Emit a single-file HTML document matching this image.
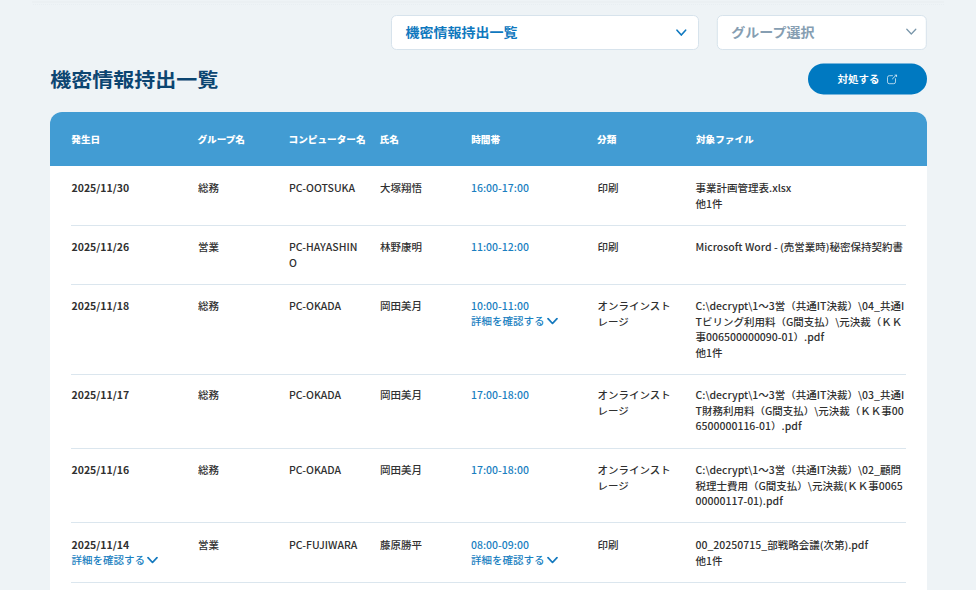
<!DOCTYPE html>
<html lang="ja">
<head>
<meta charset="utf-8">
<title>機密情報持出一覧</title>
<style>
*{box-sizing:border-box;margin:0;padding:0}
html,body{width:976px;height:590px;overflow:hidden}
body{background:#eef3f6;font-family:"Noto Sans CJK JP","Liberation Sans",sans-serif;color:#303030;position:relative;-webkit-font-smoothing:antialiased}
.topband{position:absolute;left:32px;top:1px;width:912px;height:2px;background:#ebf0f3}
.topdots{position:absolute;left:32px;top:4px;width:912px;height:1px;background-image:repeating-linear-gradient(90deg,transparent 0 1px,#e8eef2 1px 2px)}
.sel{position:absolute;top:15px;height:34.5px;background:#fff;border:1px solid #d7e3ec;border-radius:5.5px;font-size:14px;line-height:30px;white-space:nowrap}
.sel1{left:391px;width:308px;padding-left:13.6px;color:#0f78be;font-weight:700}
.sel2{left:716.5px;width:210.5px;transform:translateX(-0.2px);padding-left:14px;color:#869eb2;font-weight:700}
.sel svg{position:absolute;top:13px}
.sq{display:inline-block;transform:scaleY(0.93);transform-origin:0 50%}
.title{position:absolute;left:50.3px;top:64px;font-size:21px;line-height:30px;font-weight:700;color:#0c4571;white-space:nowrap;transform:scaleY(0.93);transform-origin:0 6px}
.btn{position:absolute;left:808px;top:63px;width:119px;height:31px;border-radius:16px;transform:translateY(0.4px);background:#0079c1;color:#fff;font-size:10.5px;font-weight:700;line-height:31.4px;white-space:nowrap}
.btn span{position:absolute;left:29.6px;top:0;transform:scaleY(0.93);transform-origin:0 50%}
.btn svg{position:absolute;left:79.4px;top:11px}
.card{position:absolute;left:50px;top:112px;width:877px;height:500px;background:#fff;border-radius:12px 12px 0 0;overflow:hidden}
.thead{position:absolute;left:0;top:0;width:877px;height:54px;background:#429cd3;color:#fff;font-size:9.65px;font-weight:900;line-height:54px;white-space:nowrap}
.thead div{position:absolute;top:-0.5px;transform:scaleY(0.93);transform-origin:0 50%}
.row{position:absolute;left:21px;width:835px;border-top:1px solid #dbe6ee;font-size:10.5px;line-height:16.56px;font-weight:500}
.row>div{position:absolute;top:calc(var(--t,13px) + 1.1px);white-space:nowrap;transform:scaleY(0.93);transform-origin:0 0}
.c1{left:0.5px;width:110px;font-weight:700}
.c2{left:127px;width:73px}
.c3{left:218px;width:73px}
.c4{left:309px;width:73px}
.c5{left:400px;width:108px;color:#1a7fc1}
.c6{left:526.5px;width:81px}
.c7{left:624.5px;width:210px}
.lnk{color:#1a7fc1;font-weight:500;white-space:nowrap;display:block;position:relative;top:-0.5px}
.lnk svg{display:inline-block;vertical-align:-0.1px;margin-left:2px}
</style>
</head>
<body>
<div class="topband"></div>
<div class="topdots"></div>

<div class="sel sel1"><span class="sq">機密情報持出一覧</span><svg style="left:284.2px" width="12" height="8" viewBox="0 0 12 8"><path d="M1 1.2 L5.3 6.05 L9.6 1.2" fill="none" stroke="#0f79c0" stroke-width="1.6" stroke-linecap="round" stroke-linejoin="round"/></svg></div>
<div class="sel sel2"><span class="sq">グループ選択</span><svg style="left:188.4px;top:12.3px" width="12" height="8" viewBox="0 0 12 8"><path d="M1 1.2 L5.5 6 L10 1.2" fill="none" stroke="#7996aa" stroke-width="1.25" stroke-linecap="round" stroke-linejoin="round"/></svg></div>

<div class="title">機密情報持出一覧</div>

<div class="btn"><span>対処する</span><svg width="11" height="11" viewBox="0 0 11 11"><path d="M5.9 1.3 H2.3 Q0.5 1.3 0.5 3.1 V7.5 Q0.5 9.3 2.3 9.3 H6.7 Q8.5 9.3 8.5 7.5 V3.9" fill="none" stroke="#fff" stroke-opacity="0.8" stroke-width="0.85"/><path d="M5.2 4.7 L9.5 0.5 M7.5 0.45 H9.55 V2.5" fill="none" stroke="#fff" stroke-opacity="0.9" stroke-width="0.85"/></svg></div>

<div class="card">
  <div class="thead">
    <div style="left:21.3px">発生日</div>
    <div style="left:147.4px">グループ名</div>
    <div style="left:238.6px">コンピューター名</div>
    <div style="left:329.6px">氏名</div>
    <div style="left:421.2px">時間帯</div>
    <div style="left:547.1px">分類</div>
    <div style="left:646px">対象ファイル</div>
  </div>

  <div class="row" style="top:54px;height:59px;border-top:0;--t:14px">
    <div class="c1">2025/11/30</div><div class="c2">総務</div><div class="c3">PC-OOTSUKA</div><div class="c4">大塚翔悟</div>
    <div class="c5">16:00-17:00</div><div class="c6">印刷</div><div class="c7">事業計画管理表.xlsx<br>他1件</div>
  </div>
  <div class="row" style="top:113px;height:59px;--t:13px">
    <div class="c1">2025/11/26</div><div class="c2">営業</div><div class="c3">PC-HAYASHIN<br>O</div><div class="c4">林野康明</div>
    <div class="c5">11:00-12:00</div><div class="c6">印刷</div><div class="c7">Microsoft Word - (売営業時)秘密保持契約書</div>
  </div>
  <div class="row" style="top:172px;height:90px;--t:13px">
    <div class="c1">2025/11/18</div><div class="c2">総務</div><div class="c3">PC-OKADA</div><div class="c4">岡田美月</div>
    <div class="c5">10:00-11:00<span class="lnk">詳細を確認する<svg width="11" height="8" viewBox="0 0 11 8"><path d="M1 1.1 L5.5 6.3 L10 1.1" fill="none" stroke="#1479be" stroke-width="1.7" stroke-linecap="round" stroke-linejoin="round"/></svg></span></div>
    <div class="c6">オンラインスト<br>レージ</div><div class="c7">C:\decrypt\1～3営（共通IT決裁）\04_共通I<br>Tビリング利用料（G間支払）\元決裁（ＫＫ<br>事006500000090-01）.pdf<br>他1件</div>
  </div>
  <div class="row" style="top:262px;height:74px;--t:12px">
    <div class="c1">2025/11/17</div><div class="c2">総務</div><div class="c3">PC-OKADA</div><div class="c4">岡田美月</div>
    <div class="c5">17:00-18:00</div><div class="c6">オンラインスト<br>レージ</div><div class="c7">C:\decrypt\1～3営（共通IT決裁）\03_共通I<br>T財務利用料（G間支払）\元決裁（ＫＫ事00<br>6500000116-01）.pdf</div>
  </div>
  <div class="row" style="top:336px;height:74px;--t:13px">
    <div class="c1">2025/11/16</div><div class="c2">総務</div><div class="c3">PC-OKADA</div><div class="c4">岡田美月</div>
    <div class="c5">17:00-18:00</div><div class="c6">オンラインスト<br>レージ</div><div class="c7">C:\decrypt\1～3営（共通IT決裁）\02_顧問<br>税理士費用（G間支払）\元決裁(ＫＫ事0065<br>00000117-01).pdf</div>
  </div>
  <div class="row" style="top:410px;height:60px;--t:14px">
    <div class="c1">2025/11/14<span class="lnk">詳細を確認する<svg width="11" height="8" viewBox="0 0 11 8"><path d="M1 1.1 L5.5 6.3 L10 1.1" fill="none" stroke="#1479be" stroke-width="1.7" stroke-linecap="round" stroke-linejoin="round"/></svg></span></div><div class="c2">営業</div><div class="c3">PC-FUJIWARA</div><div class="c4">藤原勝平</div>
    <div class="c5">08:00-09:00<span class="lnk">詳細を確認する<svg width="11" height="8" viewBox="0 0 11 8"><path d="M1 1.1 L5.5 6.3 L10 1.1" fill="none" stroke="#1479be" stroke-width="1.7" stroke-linecap="round" stroke-linejoin="round"/></svg></span></div>
    <div class="c6">印刷</div><div class="c7">00_20250715_部戦略会議(次第).pdf<br>他1件</div>
  </div>
  <div class="row" style="top:470px;height:30px"></div>
</div>
</body>
</html>
